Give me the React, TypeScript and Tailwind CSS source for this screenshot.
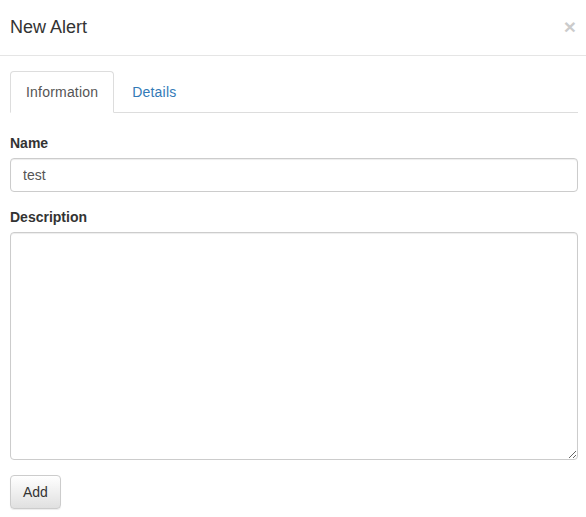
import { useState } from 'react';

export default function App() {
  const [tab, setTab] = useState<'info' | 'details'>('info');
  const [name, setName] = useState('test');
  const [description, setDescription] = useState('');

  return (
    <div className="min-h-screen bg-white text-[14px] leading-[20px] text-[#333] font-['Liberation_Sans',Arial,sans-serif]">
      {/* Header */}
      <div className="flex items-center justify-between border-b border-[#e5e5e5] px-[10px] py-[15px]">
        <h4 className="text-[18px] leading-[25px] text-[#333]">New Alert</h4>
        <button
          type="button"
          className="-mt-[2px] text-[21px] font-bold leading-none text-black opacity-20"
        >
          ×
        </button>
      </div>

      {/* Body */}
      <div className="pl-[10px] pr-[8px] pt-[15px]">
        <ul className="flex border-b border-[#ddd]">
          <li className="-mb-px mr-[2px]">
            <button
              type="button"
              onClick={() => setTab('info')}
              className={`block rounded-t-[4px] border px-[15px] py-[10px] leading-[20px] tracking-[0.2px] ${
                tab === 'info'
                  ? 'border-[#ddd] border-b-transparent bg-white text-[#555]'
                  : 'border-transparent text-[#337ab7]'
              }`}
            >
              Information
            </button>
          </li>
          <li className="-mb-px mr-[2px]">
            <button
              type="button"
              onClick={() => setTab('details')}
              className={`block rounded-t-[4px] border px-[15px] py-[10px] leading-[20px] tracking-[0.2px] ${
                tab === 'details'
                  ? 'border-[#ddd] border-b-transparent bg-white text-[#555]'
                  : 'border-transparent text-[#337ab7]'
              }`}
            >
              Details
            </button>
          </li>
        </ul>

        <div className="pt-[20px]">
          <div className="mb-[15px]">
            <label className="mb-[5px] block font-bold">Name</label>
            <input
              type="text"
              value={name}
              onChange={(e) => setName(e.target.value)}
              className="block h-[34px] w-full rounded-[4px] border border-[#ccc] px-[12px] py-[6px] text-[14px] text-[#555] shadow-[inset_0_1px_1px_rgba(0,0,0,0.075)] outline-none"
            />
          </div>
          <div className="mb-[15px]">
            <label className="mb-[5px] block font-bold">Description</label>
            <textarea
              value={description}
              onChange={(e) => setDescription(e.target.value)}
              className="block h-[228px] w-full rounded-[4px] border border-[#ccc] px-[12px] py-[6px] text-[14px] text-[#555] shadow-[inset_0_1px_1px_rgba(0,0,0,0.075)] outline-none"
            />
          </div>
          <button
            type="button"
            className="h-[34px] rounded-[4px] border border-[#ccc] bg-gradient-to-b from-white to-[#e0e0e0] px-[12px] py-[6px] text-[14px] leading-[20px] text-[#333] shadow-[inset_0_1px_0_rgba(255,255,255,0.15),0_1px_1px_rgba(0,0,0,0.075)]"
          >
            Add
          </button>
        </div>
      </div>
    </div>
  );
}
